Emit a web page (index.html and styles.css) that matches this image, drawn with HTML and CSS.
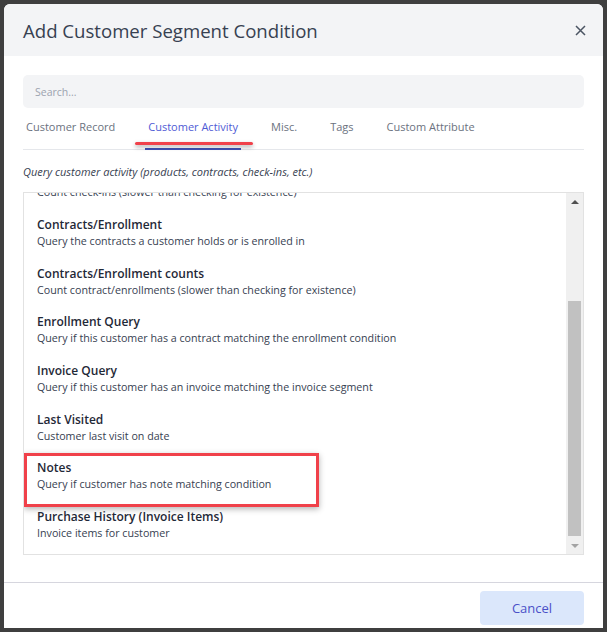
FILE: index.html
```html
<!DOCTYPE html>
<html lang="en">
	<head>
		<meta charset="utf-8"/>
		<title>Add Customer Segment Condition</title>
		<link rel="stylesheet" href="styles.css">
	</head>
	<body>
		<div class="dialog">
			<div class="dialog-header">
				<h2 class="dialog-title">Add Customer Segment Condition</h2>
				<button class="close-btn" aria-label="Close">
					<svg width="11" height="11" viewBox="0 0 11 11"><path d="M1 1L10 10M10 1L1 10" stroke="#4b5563" stroke-width="1.5" fill="none"/></svg>
				</button>
			</div>
			<div class="dialog-body">
				<input class="search" type="text" placeholder="Search...">
				<div class="tabs">
					<span class="tab">Customer Record</span>
					<span class="tab active">Customer Activity<span class="mark-line"></span></span>
					<span class="tab">Misc.</span>
					<span class="tab">Tags</span>
					<span class="tab">Custom Attribute</span>
				</div>
				<p class="tab-desc">Query customer activity (products, contracts, check-ins, etc.)</p>
				<div class="list-box">
					<div class="list">
						<div class="item">
							<div class="item-title">Check-ins</div>
							<div class="item-desc">Query if this customer has checked in</div>
						</div>
						<div class="item">
							<div class="item-title">Check-in counts</div>
							<div class="item-desc">Count check-ins (slower than checking for existence)</div>
						</div>
						<div class="item">
							<div class="item-title">Contracts/Enrollment</div>
							<div class="item-desc">Query the contracts a customer holds or is enrolled in</div>
						</div>
						<div class="item">
							<div class="item-title">Contracts/Enrollment counts</div>
							<div class="item-desc">Count contract/enrollments (slower than checking for existence)</div>
						</div>
						<div class="item">
							<div class="item-title">Enrollment Query</div>
							<div class="item-desc">Query if this customer has a contract matching the enrollment condition</div>
						</div>
						<div class="item">
							<div class="item-title">Invoice Query</div>
							<div class="item-desc">Query if this customer has an invoice matching the invoice segment</div>
						</div>
						<div class="item">
							<div class="item-title">Last Visited</div>
							<div class="item-desc">Customer last visit on date</div>
						</div>
						<div class="item">
							<div class="item-title">Notes</div>
							<div class="item-desc">Query if customer has note matching condition</div>
							<span class="mark-box"></span>
						</div>
						<div class="item">
							<div class="item-title">Purchase History (Invoice Items)</div>
							<div class="item-desc">Invoice items for customer</div>
						</div>
					</div>
					<div class="scrollbar">
						<div class="sb-btn"><span class="arrow-up"></span></div>
						<div class="sb-track"><div class="sb-thumb"></div></div>
						<div class="sb-btn"><span class="arrow-down"></span></div>
					</div>
				</div>
			</div>
			<div class="dialog-footer">
				<button class="cancel-btn">Cancel</button>
			</div>
		</div>
	</body>
</html>
```
FILE: styles.css
```css
html, body {
	margin: 0;
	height: 632px;
	overflow: hidden;
}
body {
	background-color: #3f3f3f;
	padding: 4px 4px 0;
	box-sizing: border-box;
	font-family: "Open Sans", "Noto Sans", sans-serif;
}
.dialog {
	height: 624px;
	background: #ffffff;
	border-radius: 6px 6px 0 0;
	overflow: hidden;
	display: flex;
	flex-direction: column;
}
.dialog-header {
	height: 52px;
	flex-shrink: 0;
	background: #f3f4f6;
	display: flex;
	align-items: center;
	justify-content: space-between;
	padding: 0 17px 0 19px;
}
.dialog-title {
	margin: 0;
	font-size: 18.6px;
	font-weight: 400;
	color: #374151;
}
.close-btn {
	border: none;
	background: none;
	padding: 0;
	display: flex;
	cursor: pointer;
}
.dialog-body {
	flex: 1;
	padding: 19px 19px 0;
}
.search {
	display: block;
	width: 100%;
	height: 33px;
	box-sizing: border-box;
	border: none;
	border-radius: 5px;
	background: #f3f4f6;
	padding: 0 12px;
	font-family: inherit;
	font-size: 10.5px;
	color: #374151;
}
.search::placeholder {
	color: #9ca3af;
}
.tabs {
	display: flex;
	gap: 27px;
	padding-top: 11px;
	border-bottom: 1px solid #e5e7eb;
}
.tab {
	position: relative;
	padding: 0 3px 13px;
	font-size: 11px;
	line-height: 16px;
	color: #6b7280;
	border-bottom: 2px solid transparent;
	margin-bottom: -1px;
}
.tab.active {
	color: #4f5bd5;
	border-bottom-color: #3f51b5;
}
.mark-line {
	position: absolute;
	left: -10px;
	top: 23px;
	width: 118px;
	height: 3px;
	border-radius: 2px;
	background: #f0414a;
	box-shadow: 0 2px 4px rgba(0,0,0,0.35);
}
.tab-desc {
	margin: 13px 0 11px;
	font-size: 11px;
	line-height: 18px;
	font-style: italic;
	color: #374151;
}
.list-box {
	height: 363px;
	box-sizing: border-box;
	border: 1px solid #e2e2e2;
	display: flex;
}
.list {
	flex: 1;
	overflow: hidden;
	display: flex;
	flex-direction: column;
	justify-content: flex-end;
	padding-bottom: 4px;
}
.item {
	position: relative;
	flex-shrink: 0;
	padding: 6.5px 13px 8.17px;
}
.item-title {
	font-size: 12px;
	line-height: 17px;
	font-weight: 600;
	color: #1f2937;
}
.item-desc {
	font-size: 10.7px;
	line-height: 17px;
	color: #374151;
}
.mark-box {
	position: absolute;
	left: 0;
	top: 0;
	width: 295px;
	height: 54px;
	box-sizing: border-box;
	border: 3px solid #f0414a;
	box-shadow: 0 2px 6px rgba(0,0,0,0.3);
}
.scrollbar {
	width: 17px;
	background: #f0f0f0;
	display: flex;
	flex-direction: column;
}
.sb-btn {
	height: 17px;
	display: flex;
	align-items: center;
	justify-content: center;
}
.arrow-up {
	border-left: 4px solid transparent;
	border-right: 4px solid transparent;
	border-bottom: 4px solid #505050;
}
.arrow-down {
	border-left: 4px solid transparent;
	border-right: 4px solid transparent;
	border-top: 4px solid #a3a3a3;
}
.sb-track {
	flex: 1;
	display: flex;
	flex-direction: column;
	justify-content: flex-end;
	padding: 0 2px 1px;
}
.sb-thumb {
	height: 235px;
	background: #c1c1c1;
}
.dialog-footer {
	display: flex;
	justify-content: flex-end;
	padding: 8px 19px 3px;
	border-top: 1px solid #d6d6de;
}
.cancel-btn {
	width: 104px;
	height: 34px;
	border: none;
	border-radius: 4px;
	background: #dbe7fb;
	color: #4a50c8;
	font-family: inherit;
	font-size: 13px;
	cursor: pointer;
}
```
